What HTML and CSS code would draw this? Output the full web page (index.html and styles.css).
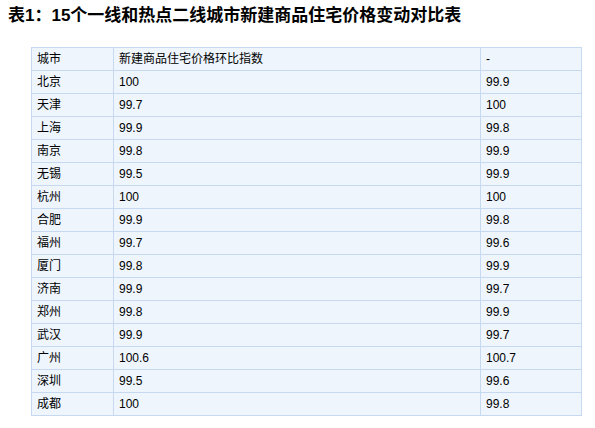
FILE: index.html
```html
<!DOCTYPE html>
<html lang="zh">
<head>
<meta charset="utf-8">
<link rel="stylesheet" href="styles.css">
</head>
<body>
<h1 class="title">表1：15个一线和热点二线城市新建商品住宅价格变动对比表</h1>
<table class="data">
<colgroup><col class="c1"><col class="c2"><col class="c3"></colgroup>
<tr><td>城市</td><td>新建商品住宅价格环比指数</td><td>-</td></tr>
<tr><td>北京</td><td>100</td><td>99.9</td></tr>
<tr><td>天津</td><td>99.7</td><td>100</td></tr>
<tr><td>上海</td><td>99.9</td><td>99.8</td></tr>
<tr><td>南京</td><td>99.8</td><td>99.9</td></tr>
<tr><td>无锡</td><td>99.5</td><td>99.9</td></tr>
<tr><td>杭州</td><td>100</td><td>100</td></tr>
<tr><td>合肥</td><td>99.9</td><td>99.8</td></tr>
<tr><td>福州</td><td>99.7</td><td>99.6</td></tr>
<tr><td>厦门</td><td>99.8</td><td>99.9</td></tr>
<tr><td>济南</td><td>99.9</td><td>99.7</td></tr>
<tr><td>郑州</td><td>99.8</td><td>99.9</td></tr>
<tr><td>武汉</td><td>99.9</td><td>99.7</td></tr>
<tr><td>广州</td><td>100.6</td><td>100.7</td></tr>
<tr><td>深圳</td><td>99.5</td><td>99.6</td></tr>
<tr><td>成都</td><td>100</td><td>99.8</td></tr>
</table>
</body>
</html>
```
FILE: styles.css
```css
html, body {
  margin: 0;
  padding: 0;
  background: #ffffff;
}
body {
  padding: 6px 0 0 8px;
  font-family: "Liberation Sans", "Noto Sans CJK SC", sans-serif;
  color: #000;
}
.title {
  margin: 0;
  font-size: 17px;
  line-height: 20px;
  font-weight: bold;
}
.data {
  margin: 21px 0 0 23px;
  border-collapse: collapse;
  table-layout: fixed;
  width: 550px;
  background: #eef5fd;
  font-size: 12px;
}
.c1 { width: 82px; }
.c2 { width: 367px; }
.c3 { width: 101px; }
.data td {
  border: 1px solid #c6d9f1;
  height: 23px;
  padding: 0 0 0 5px;
  line-height: 14px;
  vertical-align: middle;
  box-sizing: border-box;
}
```
